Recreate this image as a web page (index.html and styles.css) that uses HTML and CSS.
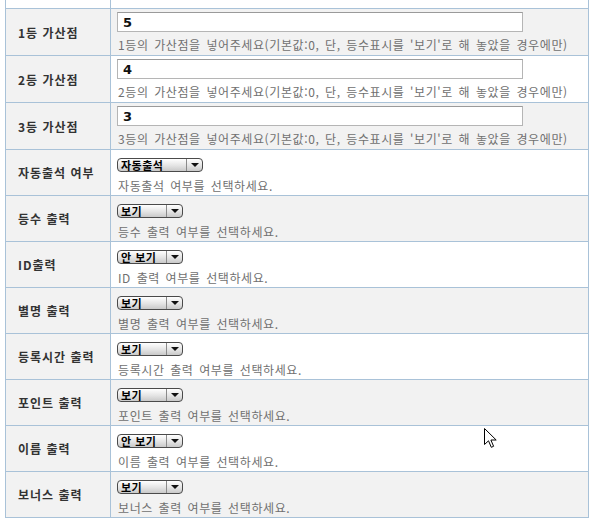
FILE: index.html
```html
<!DOCTYPE html>
<html lang="ko">
<head>
    <meta charset="UTF-8">
    <title>출석부 설정</title>
    <link rel="stylesheet" href="styles.css">
</head>
<body>

<div class="page">
<table class="config">
    <colgroup>
        <col class="label-col">
        <col>
    </colgroup>
    <tr class="cut"><th></th><td></td></tr>
    <tr class="odd">
        <th>1등 가산점</th>
        <td>
            <input type="text" class="text" value="5" />
            <p class="help">1등의 가산점을 넣어주세요(기본값:0, 단, 등수표시를 '보기'로 해 놓았을 경우에만)</p>
        </td>
    </tr>
    <tr>
        <th>2등 가산점</th>
        <td>
            <input type="text" class="text" value="4" />
            <p class="help">2등의 가산점을 넣어주세요(기본값:0, 단, 등수표시를 '보기'로 해 놓았을 경우에만)</p>
        </td>
    </tr>
    <tr class="odd">
        <th>3등 가산점</th>
        <td>
            <input type="text" class="text" value="3" />
            <p class="help">3등의 가산점을 넣어주세요(기본값:0, 단, 등수표시를 '보기'로 해 놓았을 경우에만)</p>
        </td>
    </tr>
    <tr class="choice">
        <th>자동출석 여부</th>
        <td>
            <span class="select wide"><span class="val">자동출석</span><span class="arrow"></span></span>
            <p class="help">자동출석 여부를 선택하세요.</p>
        </td>
    </tr>
    <tr class="choice odd">
        <th>등수 출력</th>
        <td>
            <span class="select"><span class="val">보기</span><span class="arrow"></span></span>
            <p class="help">등수 출력 여부를 선택하세요.</p>
        </td>
    </tr>
    <tr class="choice">
        <th>ID출력</th>
        <td>
            <span class="select"><span class="val">안 보기</span><span class="arrow"></span></span>
            <p class="help">ID 출력 여부를 선택하세요.</p>
        </td>
    </tr>
    <tr class="choice odd">
        <th>별명 출력</th>
        <td>
            <span class="select"><span class="val">보기</span><span class="arrow"></span></span>
            <p class="help">별명 출력 여부를 선택하세요.</p>
        </td>
    </tr>
    <tr class="choice">
        <th>등록시간 출력</th>
        <td>
            <span class="select"><span class="val">보기</span><span class="arrow"></span></span>
            <p class="help">등록시간 출력 여부를 선택하세요.</p>
        </td>
    </tr>
    <tr class="choice odd">
        <th>포인트 출력</th>
        <td>
            <span class="select"><span class="val">보기</span><span class="arrow"></span></span>
            <p class="help">포인트 출력 여부를 선택하세요.</p>
        </td>
    </tr>
    <tr class="choice">
        <th>이름 출력</th>
        <td>
            <span class="select"><span class="val">안 보기</span><span class="arrow"></span></span>
            <p class="help">이름 출력 여부를 선택하세요.</p>
        </td>
    </tr>
    <tr class="choice odd">
        <th>보너스 출력</th>
        <td>
            <span class="select"><span class="val">보기</span><span class="arrow"></span></span>
            <p class="help">보너스 출력 여부를 선택하세요.</p>
        </td>
    </tr>
</table>

<svg class="cursor" width="14" height="21" viewBox="0 0 14 21">
    <path d="M0.5 0.5 L0.5 16.5 L4.5 12.8 L7.3 19.3 L9.6 18.3 L6.9 12 L12.2 12 Z" fill="#fff" stroke="#000" stroke-width="1"/>
</svg>
</div>

</body>
</html>
```

FILE: styles.css
```css
body {
    margin: 0;
    background-color: #ffffff;
    font-family: "Noto Sans CJK KR", "DejaVu Sans", sans-serif;
    font-size: 12px;
    color: #333333;
}

.page {
    position: relative;
    padding-left: 5px;
    width: 593px;
    height: 527px;
    overflow: hidden;
}

.config {
    border-collapse: collapse;
    width: 584px;
    table-layout: fixed;
}

.label-col {
    width: 105px;
}

.config th,
.config td {
    border: 1px solid #a9c2d8;
    vertical-align: top;
}

.config th {
    background-color: #f2f2f2;
    text-align: left;
    vertical-align: middle;
    padding: 0 0 0 12px;
    font-weight: bold;
    font-size: 12px;
    color: #333333;
    letter-spacing: 1px;
    white-space: nowrap;
}

.config td {
    padding: 3px 6px 2px 6px;
    background-color: #ffffff;
}

.config tr.odd td {
    background-color: #f2f2f2;
}

.config tr.cut th,
.config tr.cut td {
    height: 8px;
    padding: 0;
    border-top: none;
    background-color: #ffffff;
}

.config tr.choice td {
    padding: 8px 6px 1px 6px;
}

.text {
    display: block;
    box-sizing: border-box;
    width: 406px;
    height: 20px;
    margin: 0 0 5px 0;
    padding: 0 5px;
    border: 1px solid #b5b5b5;
    border-top-color: #9a9a9a;
    background-color: #ffffff;
    font-family: "DejaVu Sans", sans-serif;
    font-weight: bold;
    font-size: 13px;
    color: #111111;
}

.help {
    margin: 0;
    padding-left: 1px;
    line-height: 16px;
    height: 16px;
    font-size: 12px;
    color: #707070;
    letter-spacing: 0.6px;
    word-spacing: 1.7px;
    white-space: nowrap;
}

.config tr.choice .help {
    margin-top: 6px;
}

.select {
    display: flex;
    box-sizing: border-box;
    width: 66px;
    height: 14px;
    border: 1px solid #4a4a4a;
    border-radius: 4px;
    background: linear-gradient(#ffffff, #e4e4e4 55%, #c9c9c9);
}

.select.wide {
    width: 86px;
}

.select .val {
    flex: 1;
    padding-left: 3px;
    font-weight: bold;
    font-size: 11px;
    line-height: 12px;
    color: #000000;
    letter-spacing: 0.5px;
    white-space: nowrap;
}

.select .arrow {
    position: relative;
    width: 15px;
    border-left: 1px solid #8a8a8a;
}

.select .arrow::after {
    content: "";
    position: absolute;
    left: 4px;
    top: 4px;
    border-left: 4px solid transparent;
    border-right: 4px solid transparent;
    border-top: 4px solid #111111;
}

.cursor {
    position: absolute;
    left: 484px;
    top: 428px;
}
```
